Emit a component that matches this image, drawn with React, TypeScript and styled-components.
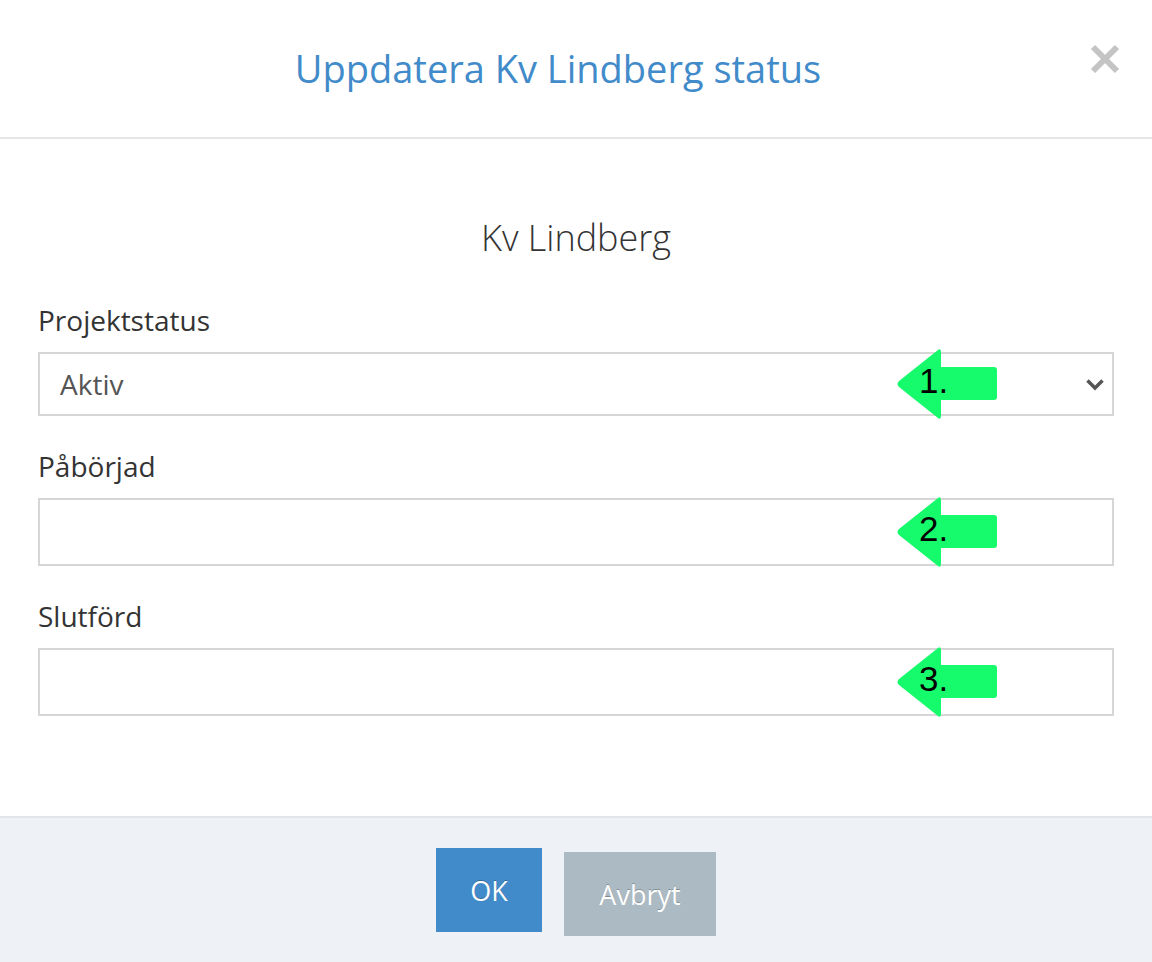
import React from "react";
import styled, { createGlobalStyle } from "styled-components";

const Global = createGlobalStyle`
  html, body { margin: 0; padding: 0; background: #fff; }
  body { font-family: "Open Sans", "Noto Sans", sans-serif; color: #333; }
  * { box-sizing: border-box; }
`;

const Modal = styled.div`
  width: 1152px;
  height: 962px;
  display: flex;
  flex-direction: column;
  background: #fff;
`;

const Header = styled.header`
  position: relative;
  height: 139px;
  border-bottom: 2px solid #e5e5e5;
  display: flex;
  align-items: center;
  justify-content: center;
`;

const Title = styled.h1`
  margin: 0 36px 2px 0;
  font-weight: 400;
  font-size: 38px;
  color: #428bca;
  letter-spacing: 0;
`;

const Close = styled.button`
  position: absolute;
  right: 28px;
  top: 40px;
  width: 38px;
  height: 38px;
  padding: 0;
  border: 0;
  background: none;
  display: flex;
  align-items: center;
  justify-content: center;
`;

const Body = styled.main`
  flex: 1;
  padding: 72px 38px 0 38px;
  display: flex;
  flex-direction: column;
`;

const Subject = styled.h2`
  margin: 0 0 35px;
  text-align: center;
  font-weight: 300;
  font-size: 36px;
  line-height: 54px;
  color: #333;
`;

const Field = styled.div`
  display: flex;
  flex-direction: column;
  margin-bottom: 30px;
`;

const Label = styled.label`
  font-size: 28px;
  line-height: 40px;
  color: #333;
  margin-bottom: 12px;
`;

const InputWrap = styled.div`
  position: relative;
`;

const Box = styled.div<{ $h: number }>`
  height: ${(p) => p.$h}px;
  border: 2px solid #d6d6d6;
  background: #fff;
  display: flex;
  align-items: center;
  justify-content: space-between;
  padding: 0 7px 0 20px;
  font-size: 28px;
  color: #555;
`;

const Arrow = styled.div`
  position: absolute;
  left: 857px;
  top: 50%;
  width: 102px;
  height: 72px;
  margin-top: -36px;
`;

const ArrowNum = styled.span`
  position: absolute;
  left: 24px;
  top: 13px;
  font-family: "Liberation Sans", Arial, sans-serif;
  font-weight: 400;
  font-size: 35px;
  line-height: 40px;
  color: #000;
`;

const Footer = styled.footer`
  height: 146px;
  border-top: 2px solid #e2e5ea;
  background: #eef1f5;
  display: flex;
  justify-content: center;
  align-items: flex-start;
  gap: 22px;
  padding-top: 30px;
`;

const Btn = styled.button<{ $variant: "primary" | "default"; $offset?: number }>`
  margin-top: ${(p) => p.$offset ?? 0}px;
  border: 0;
  padding: 0;
  height: 84px;
  width: ${(p) => (p.$variant === "primary" ? 106 : 152)}px;
  background: ${(p) => (p.$variant === "primary" ? "#428bca" : "#abbac3")};
  color: #fff;
  font-family: "Open Sans", sans-serif;
  font-size: 27px;
  text-shadow: 0 -1px 0 rgba(0, 0, 0, 0.25);
`;

const GreenArrow = ({ n }: { n: number }) => (
  <Arrow>
    <svg width="102" height="72" viewBox="0 0 102 72">
      <path
        d="M43 2 Q46 0 46 4 L46 19 L99 19 Q102 19 102 22 L102 49 Q102 52 99 52 L46 52 L46 68 Q46 72 43 70 L4 39 Q1 36 4 33 Z"
        fill="#16fb6b"
      />
    </svg>
    <ArrowNum>{n}.</ArrowNum>
  </Arrow>
);

const Chevron = () => (
  <svg width="20" height="13" viewBox="0 0 20 13">
    <path d="M2.5 2.5 L10 10 L17.5 2.5" fill="none" stroke="#555" strokeWidth="3.5" />
  </svg>
);

export default function App() {
  return (
    <>
      <Global />
      <Modal>
        <Header>
          <Title>Uppdatera Kv Lindberg status</Title>
          <Close aria-label="Stäng">
            <svg width="32" height="32" viewBox="0 0 32 32">
              <path d="M4 4 L28 28 M28 4 L4 28" stroke="#c4c4c4" strokeWidth="6" />
            </svg>
          </Close>
        </Header>
        <Body>
          <Subject>Kv Lindberg</Subject>
          <Field>
            <Label>Projektstatus</Label>
            <InputWrap>
              <Box $h={64}>
                <span>Aktiv</span>
                <Chevron />
              </Box>
              <GreenArrow n={1} />
            </InputWrap>
          </Field>
          <Field>
            <Label>Påbörjad</Label>
            <InputWrap>
              <Box $h={68} />
              <GreenArrow n={2} />
            </InputWrap>
          </Field>
          <Field>
            <Label>Slutförd</Label>
            <InputWrap>
              <Box $h={68} />
              <GreenArrow n={3} />
            </InputWrap>
          </Field>
        </Body>
        <Footer>
          <Btn $variant="primary">OK</Btn>
          <Btn $variant="default" $offset={4}>Avbryt</Btn>
        </Footer>
      </Modal>
    </>
  );
}
